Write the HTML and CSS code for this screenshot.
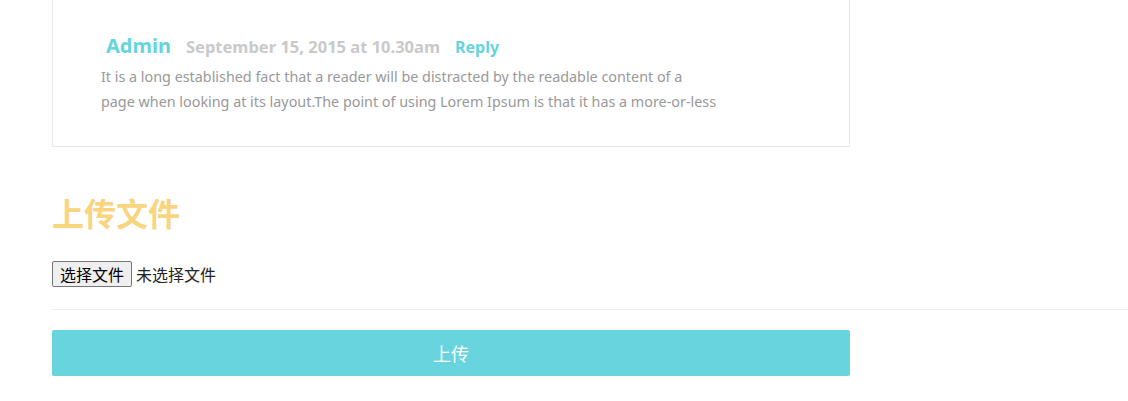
FILE: index.html
```html
<!DOCTYPE html>
<html lang="zh-CN">
<head>
<meta charset="utf-8">
<title>上传文件</title>
<link rel="stylesheet" href="styles.css">
</head>
<body>
<div class="page">
  <div class="comment-box">
    <div class="comment">
      <div class="comment-meta">
        <span class="author">Admin</span>
        <span class="date">September 15, 2015 at 10.30am</span>
        <a class="reply" href="#">Reply</a>
      </div>
      <p class="comment-text">It is a long established fact that a reader will be distracted by the readable content of a<br>page when looking at its layout.The point of using Lorem Ipsum is that it has a more-or-less</p>
    </div>
  </div>

  <h2 class="upload-title">上传文件</h2>
  <div class="file-row">
    <button class="file-btn" type="button">选择文件</button>
    <span class="file-status">未选择文件</span>
  </div>
  <div class="divider"></div>
  <button class="submit-btn" type="button">上传</button>
</div>
</body>
</html>
```
FILE: styles.css
```css
html, body {
  margin: 0;
  padding: 0;
  background: #fff;
}
body {
  font-family: "Noto Sans", "Noto Sans CJK SC", sans-serif;
  font-size: 16px;
  color: #222;
}
.page {
  padding-left: 52px;
}
.comment-box {
  border: 1px solid #e8e8e8;
  margin-top: -10px;
  padding: 41px 0 32px 48px;
  box-sizing: content-box;
  width: 748px;
}
.comment-meta {
  display: flex;
  align-items: baseline;
  gap: 15px;
  padding-left: 5px;
  height: 32px;
}
.author {
  color: #66d4dd;
  font-weight: 700;
  font-size: 20px;
}
.date {
  color: #c9c9c9;
  font-weight: 700;
  font-size: 16.5px;
}
.reply {
  color: #66d4dd;
  font-weight: 700;
  font-size: 16px;
  text-decoration: none;
}
.comment-text {
  margin: 0;
  white-space: nowrap;
  color: #999;
  font-size: 14.35px;
  line-height: 25px;
}
.upload-title {
  margin: 45px 0 0;
  color: #f9d57f;
  font-family: "Noto Sans CJK SC", sans-serif;
  font-weight: 700;
  font-size: 32px;
  line-height: 40px;
}
.file-row {
  display: flex;
  align-items: center;
  gap: 4px;
  margin-top: 29px;
  font-family: "Noto Sans CJK SC", sans-serif;
  font-size: 16px;
}
.file-btn {
  font-family: "Noto Sans CJK SC", sans-serif;
  font-size: 16px;
  line-height: 20px;
  padding: 1px 7px;
  background: #efefef;
  border: 1px solid #767676;
  border-radius: 2px;
  color: #000;
  height: 26px;
}
.file-status {
  color: #222;
}
.divider {
  border-top: 1px solid #ebebeb;
  margin-top: 22px;
}
.submit-btn {
  display: block;
  margin-top: 20px;
  width: 798px;
  height: 46px;
  border: none;
  border-radius: 2px;
  background: #68d5de;
  color: #fff;
  font-family: "Noto Sans CJK SC", sans-serif;
  font-size: 18px;
}
```
